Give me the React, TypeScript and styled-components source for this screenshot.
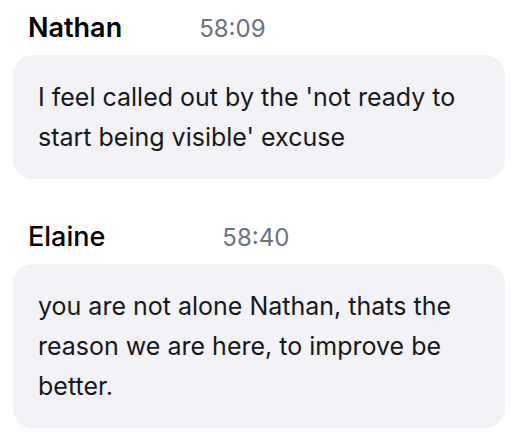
import React from "react";
import styled, { createGlobalStyle } from "styled-components";

const Global = createGlobalStyle`
  html, body { margin: 0; padding: 0; background: #ffffff; }
  body { font-family: Inter, "Noto Sans", sans-serif; -webkit-font-smoothing: antialiased; }
`;

const Feed = styled.div`
  display: flex;
  flex-direction: column;
  gap: 44px;
  padding: 14px 20px 0 13px;
`;

const Message = styled.div`
  display: flex;
  flex-direction: column;
  gap: 12px;
`;

const Header = styled.div<{ $timeGap: number }>`
  display: flex;
  align-items: baseline;
  gap: ${(p) => p.$timeGap}px;
  padding-left: 15px;
  line-height: 28px;
`;

const Name = styled.span<{ $weight: number }>`
  font-size: 27px;
  font-weight: ${(p) => p.$weight};
  color: #000000;
`;

const Time = styled.span`
  font-size: 24px;
  font-weight: 400;
  color: #6b7280;
`;

const Bubble = styled.div`
  background: #f2f2f7;
  border-radius: 20px;
  padding: 22px 25px;
  font-size: 25px;
  line-height: 40px;
  color: #18181b;
`;

const messages = [
  { name: "Nathan", weight: 600, time: "58:09", gap: 77, text: "I feel called out by the 'not ready to start being visible' excuse" },
  { name: "Elaine", weight: 500, time: "58:40", gap: 117, text: "you are not alone Nathan, thats the reason we are here, to improve be better." },
];

export default function App() {
  return (
    <>
      <Global />
      <Feed>
        {messages.map((m) => (
          <Message key={m.name}>
            <Header $timeGap={m.gap}>
              <Name $weight={m.weight}>{m.name}</Name>
              <Time>{m.time}</Time>
            </Header>
            <Bubble>{m.text}</Bubble>
          </Message>
        ))}
      </Feed>
    </>
  );
}
